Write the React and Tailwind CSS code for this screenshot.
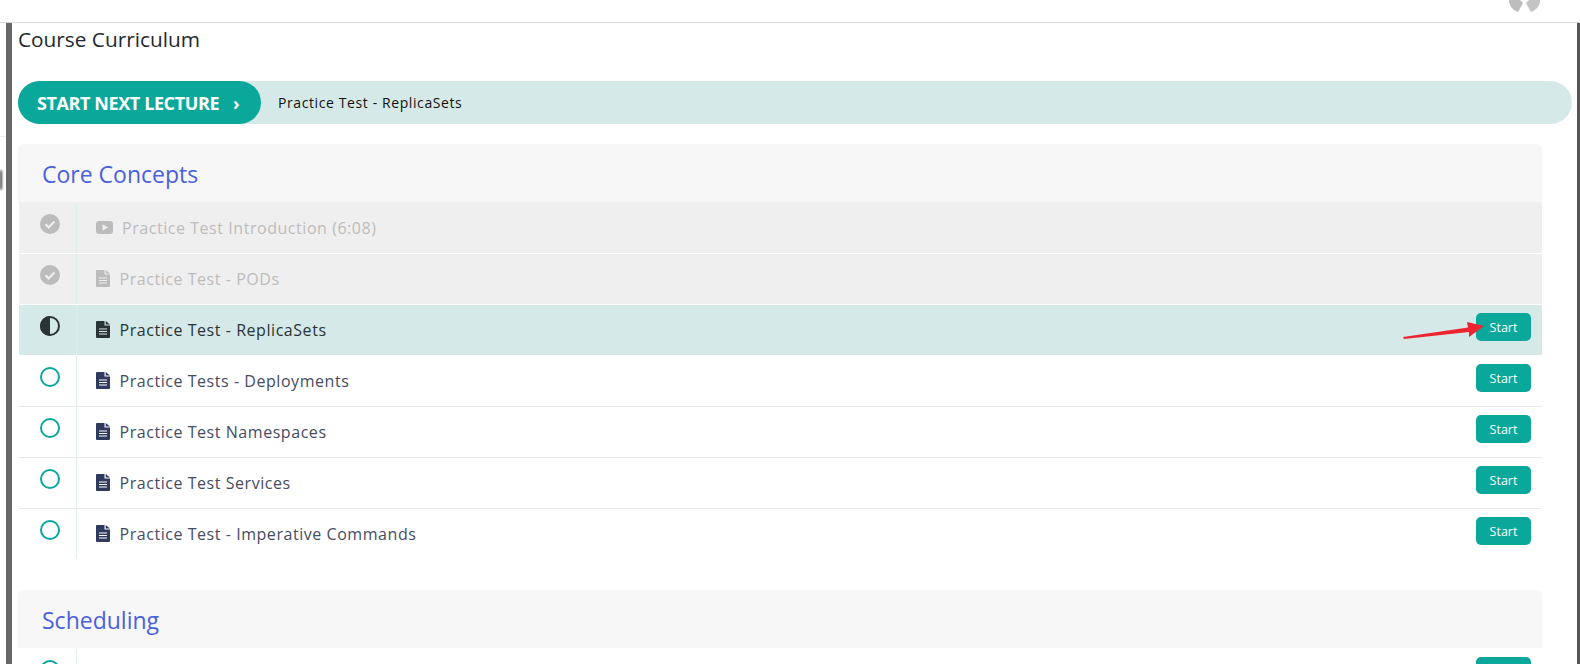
import React from 'react';

const lessons = [
  { title: 'Practice Test Introduction (6:08)', state: 'done', type: 'video', line: 'border-[#f0efef]' },
  { title: 'Practice Test - PODs', state: 'done', type: 'doc', line: 'border-white' },
  { title: 'Practice Test - ReplicaSets', state: 'current', type: 'doc', line: 'border-white' },
  { title: 'Practice Tests - Deployments', state: 'todo', type: 'doc', line: 'border-white' },
  { title: 'Practice Test Namespaces', state: 'todo', type: 'doc', line: 'border-[#e6e9e9]' },
  { title: 'Practice Test Services', state: 'todo', type: 'doc', line: 'border-[#e6e9e9]' },
  { title: 'Practice Test - Imperative Commands', state: 'todo', type: 'doc', line: 'border-[#e6e9e9]' },
];

const StatusIcon = ({ state }) => {
  if (state === 'done') {
    return (
      <svg width="20" height="20" viewBox="0 0 20 20">
        <circle cx="10" cy="10" r="10" fill="#bcbcbc" />
        <path d="M5.6 10.4l3 3 5.8-6" fill="none" stroke="#f0efef" strokeWidth="2.2" />
      </svg>
    );
  }
  if (state === 'current') {
    return (
      <svg width="20" height="20" viewBox="0 0 20 20">
        <circle cx="10" cy="10" r="9" fill="#d5eae8" stroke="#2a3336" strokeWidth="2" />
        <path d="M10 0a10 10 0 0 0 0 20z" fill="#2a3336" />
      </svg>
    );
  }
  return (
    <svg width="20" height="20" viewBox="0 0 20 20">
      <circle cx="10" cy="10" r="9" fill="none" stroke="#0aa79b" strokeWidth="2" />
    </svg>
  );
};

const DocIcon = ({ color, bg }) => (
  <svg width="14" height="17" viewBox="0 0 14 17">
    <path d="M0 1a1 1 0 0 1 1-1h7.5v4.5H14V16a1 1 0 0 1-1 1H1a1 1 0 0 1-1-1z" fill={color} />
    <path d="M9.7 0L14 3.4H9.7z" fill={color} />
    <path d="M3 8h8M3 10.5h8M3 13h8" stroke={bg} strokeWidth="1.2" />
  </svg>
);

const VideoIcon = ({ color, bg }) => (
  <svg width="17" height="13" viewBox="0 0 17 13">
    <rect width="17" height="13" rx="3" fill={color} />
    <path d="M6.5 3.2v6.6l5.5-3.3z" fill={bg} />
  </svg>
);

const Row = ({ title, state, type, line }) => {
  const done = state === 'done';
  const current = state === 'current';
  const bg = done ? '#f0efef' : current ? '#d5eae8' : '#ffffff';
  const iconColor = done ? '#bcbcbc' : current ? '#2a3336' : '#2f3a5f';
  const rowBg = done ? 'bg-[#f0efef]' : current ? 'bg-[#d5eae8]' : 'bg-white';
  return (
    <div className={`flex h-[51px] ml-px border-t ${line} ${rowBg}`}>
      <div className="w-[58px] shrink-0 border-r border-[#d9efec] pt-[11px] pl-[21px]">
        <StatusIcon state={state} />
      </div>
      <div className="flex-1 flex pl-[19px] pr-[11px]">
        <div className="flex items-center pb-px">
          <span className={`flex items-center ${type === 'video' ? 'mr-[9px]' : 'mr-[9.5px]'}`}>
            {type === 'video' ? <VideoIcon color={iconColor} bg={bg} /> : <DocIcon color={iconColor} bg={bg} />}
          </span>
          <span className={`text-[16px] tracking-[0.55px] ${done ? 'text-[#bcbcbc]' : current ? 'text-[#2a3336]' : 'text-[#464c63]'}`}>{title}</span>
        </div>
        {!done && (
          <button className="ml-auto mt-2 h-7 w-[55px] rounded-[5px] bg-[#0aa79b] pt-[2px] text-white text-[12.5px] font-medium">Start</button>
        )}
      </div>
    </div>
  );
};

const SectionHead = ({ title }) => (
  <div className="h-[58px] rounded-t-[6px] bg-[#f7f7f7] pl-6 pt-[3px] flex items-center">
    <h2 className="text-[23px] text-[#4b60dd] font-medium">{title}</h2>
  </div>
);

export default function App() {
  return (
    <div className="relative h-[664px] w-[1580px] overflow-hidden bg-white flex flex-col" style={{ fontFamily: '"Open Sans", sans-serif' }}>
      {/* top bar */}
      <div className="relative h-[23px] shrink-0 border-b border-[#d9d9d9]">
        <svg className="absolute left-[1509px] top-0" width="31" height="13" viewBox="0 0 31 13">
          <path d="M0 0h11l3 3 -5 9C4 10 0 6 0 0z" fill="#bdbdbd" />
          <path d="M31 0H20l-3 3 5 9c5-2 9-6 9-12z" fill="#c4c4c4" />
        </svg>
      </div>

      <div className="flex flex-1 min-h-0">
        <div className="relative w-[6px] shrink-0 border-t border-[#eeeeee] mt-[113px]">
          <div className="absolute left-0 top-[33px] h-5 w-[2px] rounded-r-full bg-[#333333] blur-[1px]" />
        </div>
        <div className="w-[6px] shrink-0 bg-[#666666]" />

        <div className="flex-1 min-w-0 pl-[6px]">
          <h1 className="mt-[3px] text-[20.8px] leading-[27px] font-medium text-[#22292d]">Course Curriculum</h1>

          <div className="mt-[28px] h-[43px] w-[1554px] rounded-full bg-[#d5eae8] flex items-center">
            <div className="h-full w-[243px] rounded-full bg-[#0aa79b] flex items-center pl-[19px] pt-[1px]">
              <span className="text-[18px] font-bold text-white tracking-[-0.4px]">START NEXT LECTURE</span>
              <span className="ml-[14px] text-[18px] font-bold text-white">›</span>
            </div>
            <span className="ml-[17px] text-[14px] text-[#111111] tracking-[0.6px]">Practice Test - ReplicaSets</span>
          </div>

          <div className="mt-5 w-[1524px]">
            <SectionHead title="Core Concepts" />
            {lessons.map((lesson) => (
              <Row key={lesson.title} {...lesson} />
            ))}
          </div>

          <div className="mt-[31px] w-[1524px]">
            <SectionHead title="Scheduling" />
            <Row title="" state="todo" type="doc" line="border-white" />
          </div>
        </div>

        <div className="w-[3px] shrink-0 bg-[#555555]" />
      </div>

      {/* annotation arrow */}
      <svg className="absolute left-[1400px] top-[318px] pointer-events-none" width="90" height="24" viewBox="0 0 90 24">
        <path d="M3 19L68 9.5 67 4 84 8 69 19 69 14 4 21z" fill="#ee2430" />
      </svg>
    </div>
  );
}
